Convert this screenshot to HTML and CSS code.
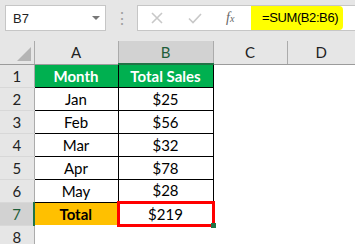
FILE: index.html
```html
<!DOCTYPE html>
<html lang="en">

<head>
    <meta charset="UTF-8">
    <title>Sum of Sales</title>
    <link rel="stylesheet" href="styles.css">
</head>

<body>
    <div class="toolbar">
        <div class="name-box">
            <span>B7</span>
            <span class="caret"></span>
        </div>
        <div class="dots">&#8942;</div>
        <div class="formula-bar">
            <div class="buttons">
                <svg width="14" height="14" viewBox="0 0 14 14"><path d="M2 2 L12 12 M12 2 L2 12" stroke="#c8c8c8" stroke-width="1.6" fill="none"/></svg>
                <svg width="14" height="14" viewBox="0 0 14 14"><path d="M1 7.5 L5 11.5 L13 3" stroke="#c8c8c8" stroke-width="1.6" fill="none"/></svg>
                <span class="fx">f<sub>x</sub></span>
            </div>
            <div class="formula">=SUM(B2:B6)</div>
        </div>
    </div>

    <table class="sheet">
        <colgroup>
            <col class="c-head">
            <col class="c-a">
            <col class="c-b">
            <col class="c-c">
            <col class="c-d">
        </colgroup>
        <tr class="col-heads">
            <th class="corner"><span class="tri"></span></th>
            <th>A</th>
            <th class="active">B</th>
            <th>C</th>
            <th>D</th>
        </tr>
        <tr>
            <th class="row-head">1</th>
            <td class="green">Month</td>
            <td class="green">Total Sales</td>
            <td class="blank"></td>
            <td class="blank"></td>
        </tr>
        <tr>
            <th class="row-head">2</th>
            <td class="month">Jan</td>
            <td class="money">$25</td>
            <td class="blank"></td>
            <td class="blank"></td>
        </tr>
        <tr>
            <th class="row-head">3</th>
            <td class="month">Feb</td>
            <td class="money">$56</td>
            <td class="blank"></td>
            <td class="blank"></td>
        </tr>
        <tr>
            <th class="row-head">4</th>
            <td class="month">Mar</td>
            <td class="money">$32</td>
            <td class="blank"></td>
            <td class="blank"></td>
        </tr>
        <tr>
            <th class="row-head">5</th>
            <td class="month">Apr</td>
            <td class="money">$78</td>
            <td class="blank"></td>
            <td class="blank"></td>
        </tr>
        <tr>
            <th class="row-head">6</th>
            <td class="month">May</td>
            <td class="money">$28</td>
            <td class="blank"></td>
            <td class="blank"></td>
        </tr>
        <tr>
            <th class="row-head active-row">7</th>
            <td class="total">Total</td>
            <td class="money selected">$219<span class="handle"></span></td>
            <td class="blank"></td>
            <td class="blank"></td>
        </tr>
        <tr>
            <th class="row-head">8</th>
            <td class="blank"></td>
            <td class="blank"></td>
            <td class="blank"></td>
            <td class="blank"></td>
        </tr>
    </table>
</body>

</html>
```

FILE: styles.css
```css
body {
    margin: 0;
    width: 355px;
    height: 244px;
    overflow: hidden;
    background-color: #e6e6e6;
    font-family: Lato, "Liberation Sans", sans-serif;
    color: #000;
}

.toolbar {
    display: flex;
    align-items: flex-start;
    height: 41px;
    padding: 5px 0 0 5px;
    box-sizing: border-box;
}

.name-box {
    display: flex;
    align-items: center;
    justify-content: space-between;
    width: 101px;
    height: 26px;
    box-sizing: border-box;
    padding: 0 5px 0 7px;
    background-color: white;
    border: 1px solid #c6c6c6;
    font-family: "Liberation Sans", sans-serif;
    font-size: 13px;
    color: #222;
}

.caret {
    width: 0;
    height: 0;
    border-left: 4px solid transparent;
    border-right: 4px solid transparent;
    border-top: 4px solid #777;
}

.dots {
    width: 31px;
    text-align: center;
    line-height: 26px;
    font-size: 16px;
    color: #a0a0a0;
}

.formula-bar {
    display: flex;
    flex: 1;
    height: 26px;
    background-color: white;
    border: 1px solid #c6c6c6;
    border-right: none;
    box-sizing: border-box;
}

.buttons {
    display: flex;
    align-items: center;
    gap: 24px;
    width: 113px;
    padding-left: 12px;
    box-sizing: border-box;
}

.fx {
    font-family: "Liberation Serif", serif;
    font-style: italic;
    font-size: 14px;
    color: #666;
}

.fx sub {
    font-size: 10px;
    vertical-align: 0;
}

.formula {
    width: 92px;
    background-color: #ffff00;
    border-radius: 0 4px 4px 0;
    padding-left: 11px;
    box-sizing: border-box;
    line-height: 24px;
    font-family: "Liberation Sans", sans-serif;
    font-size: 13px;
    letter-spacing: -0.4px;
    white-space: nowrap;
}

.sheet {
    border-collapse: collapse;
    table-layout: fixed;
    width: 355px;
    font-size: 15px;
}

.c-head { width: 34px; }
.c-a { width: 84px; }
.c-b { width: 95px; }
.c-c { width: 74px; }
.c-d { width: 68px; }

tr {
    height: 23px;
}

th,
td {
    padding: 0;
    box-sizing: border-box;
}

.col-heads th {
    background-color: #e6e6e6;
    border-right: 1px solid #ababab;
    border-bottom: 1px solid #9b9b9b;
    font-weight: normal;
    font-size: 15px;
    color: #222;
    height: 23px;
}

.col-heads th:last-child {
    border-right: none;
}

.col-heads th.active {
    background-color: #d2d2d2;
    border-bottom: 2px solid #217346;
    color: #1e5e3a;
}

.corner {
    position: relative;
}

.tri {
    position: absolute;
    right: 3px;
    bottom: 3px;
    width: 0;
    height: 0;
    border-left: 14px solid transparent;
    border-bottom: 14px solid #b4b4b4;
}

.row-head {
    background-color: #e6e6e6;
    border-right: 1px solid #ababab;
    border-bottom: 1px solid #d8d8d8;
    font-weight: normal;
    color: #222;
}

.row-head.active-row {
    background-color: #d2d2d2;
    border-right: 2px solid #217346;
    color: #1e5e3a;
}

.blank {
    background-color: white;
}

.green {
    background-color: #00b050;
    color: white;
    font-weight: bold;
    text-align: center;
    border: 1px solid #000;
}

.month {
    background-color: white;
    text-align: center;
    border: 1px solid #000;
}

.money {
    background-color: white;
    text-align: center;
    border: 1px solid #000;
}

.total {
    background-color: #ffc000;
    font-weight: bold;
    text-align: center;
}

.selected {
    position: relative;
    border: 3px solid #ff0000;
}

.handle {
    position: absolute;
    right: -4px;
    bottom: -4px;
    width: 5px;
    height: 5px;
    background-color: #217346;
}
```
